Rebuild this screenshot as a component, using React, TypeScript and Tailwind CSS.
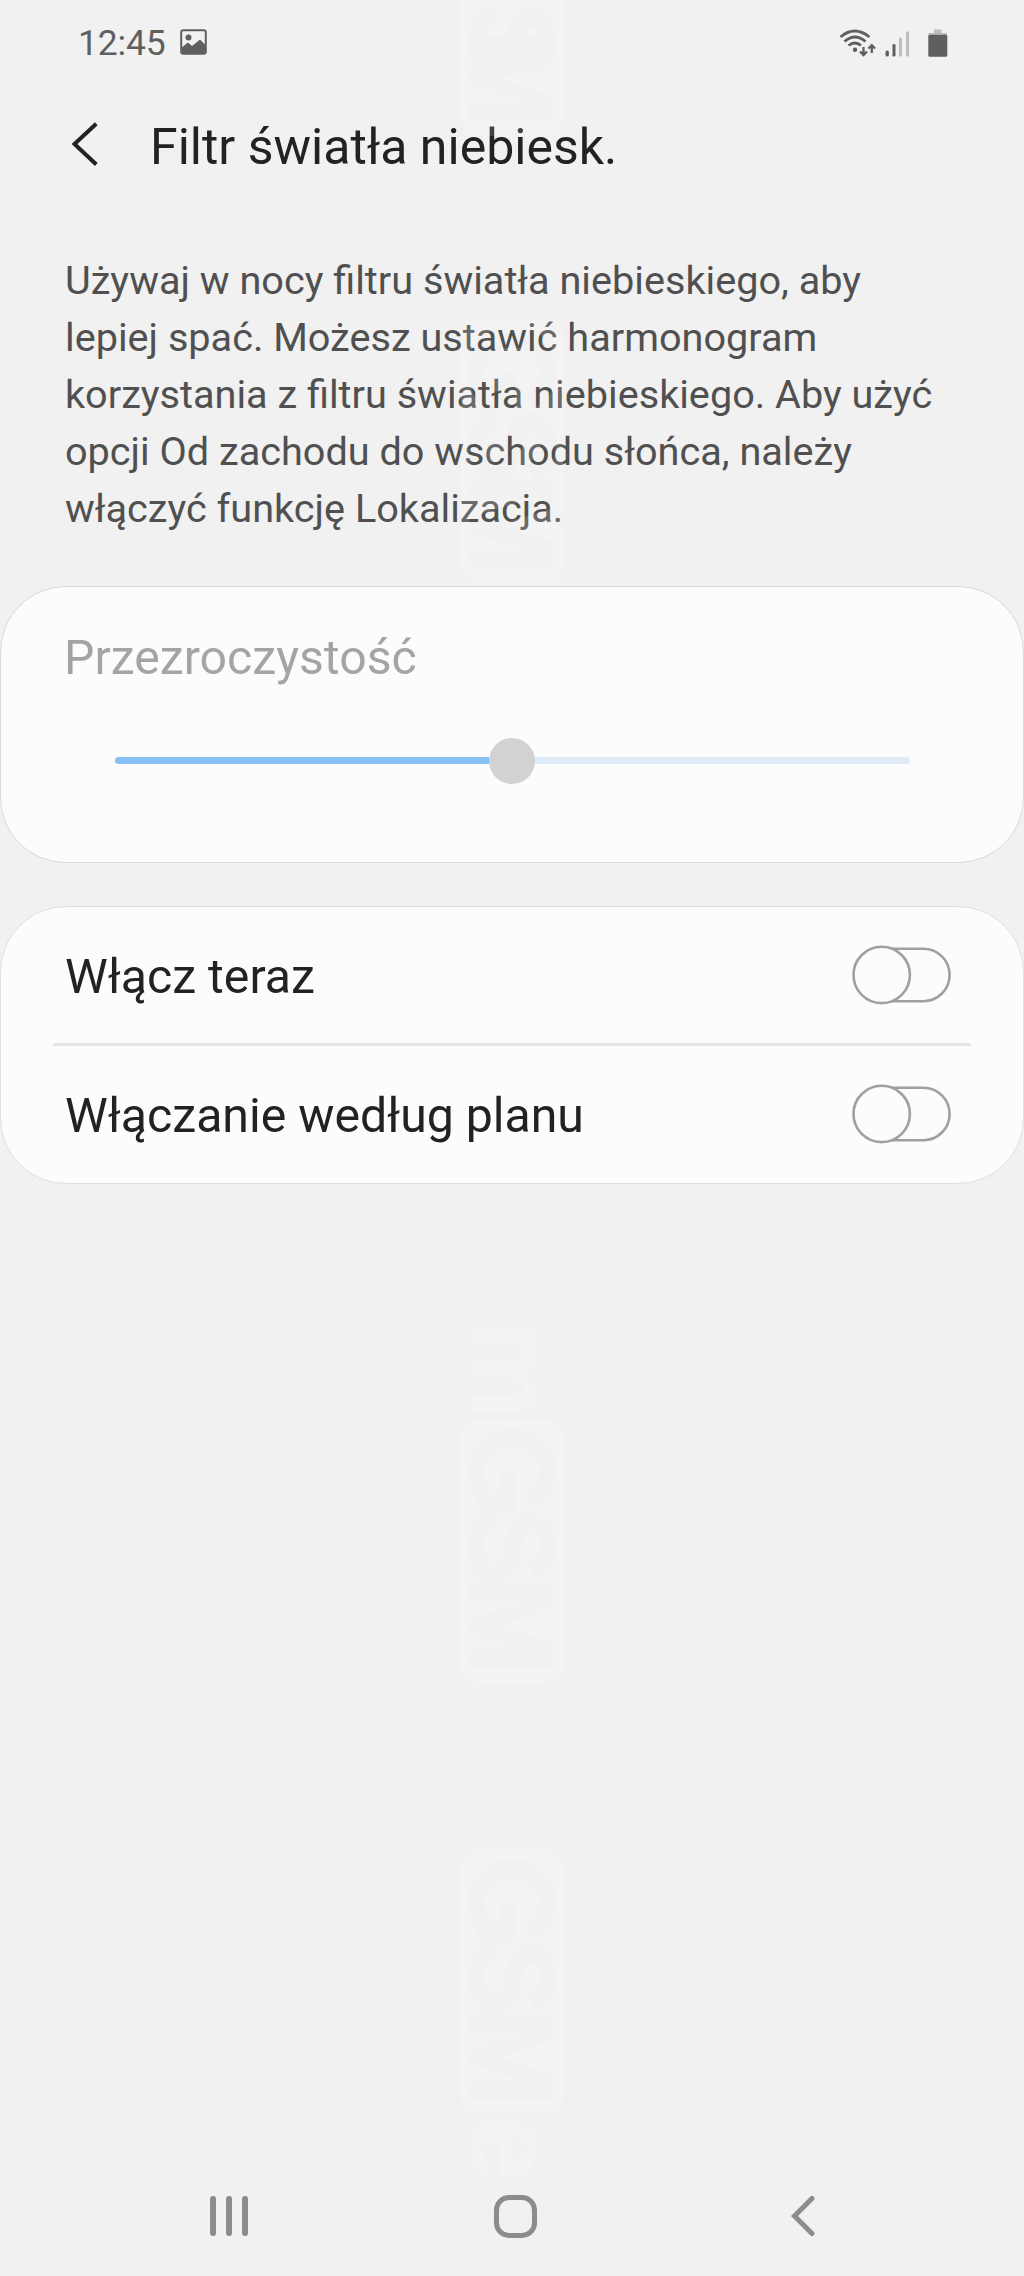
import React from "react";

function StatusBar() {
  return (
    <div className="flex h-22 items-center pr-[76px] pl-[78px] text-[#5f5f5f]">
      <span className="text-[35.5px] leading-none tracking-[-0.2px]">12:45</span>
      <svg className="mt-[-4px] ml-[15px]" width="28" height="26" viewBox="0 0 28 26">
        <rect x="1.2" y="1.2" width="24.6" height="23.6" rx="2" fill="none" stroke="#5f5f5f" strokeWidth="2" />
        <circle cx="8.5" cy="8.5" r="3" fill="#5f5f5f" />
        <path d="M1 19 L8 13.5 L12 17 L20 10.5 L26 16.5 V24 H1 Z" fill="#5f5f5f" />
      </svg>
      <svg className="mt-[-5px] ml-auto" width="110" height="30" viewBox="838 26 110 30">
        <g fill="none" stroke="#5f5f5f" strokeWidth="2.7">
          <path d="M840.5 36 Q854.5 24 869.5 36" />
          <path d="M844.5 40.5 Q855 31.5 865.5 40.5" />
          <path d="M848.5 44.5 Q855 39.5 861 44.5" />
          <path d="M863.5 46 V54 M860 50.5 L863.5 54 L867 50.5 M871.8 52 V44.5 M868.5 47.5 L871.8 44.2 L875 47.5" strokeWidth="2.3" />
        </g>
        <circle cx="855" cy="48.7" r="2.2" fill="#5f5f5f" />
        <rect x="885.5" y="49.5" width="3.4" height="6" rx="1.5" fill="#5f5f5f" />
        <rect x="892.5" y="43" width="3" height="12.5" rx="1.2" fill="#5f5f5f" />
        <rect x="899" y="36.5" width="3" height="19" rx="1.2" fill="#bcbcbc" />
        <rect x="906" y="30.5" width="3" height="25" rx="1.2" fill="#bcbcbc" />
        <path d="M934 34 V28.5 H941.5 V34 Z M928.5 32 H947 V35 H928.5 Z" fill="#bcbcbc" />
        <rect x="928.3" y="33.7" width="19" height="22" rx="1.5" fill="#5f5f5f" />
      </svg>
    </div>
  );
}

function Toggle() {
  return (
    <svg width="99" height="60" viewBox="0 0 99 60" role="switch" aria-checked="false">
      <rect x="2.6" y="3.7" width="95" height="52.5" rx="26.25" fill="#fcfcfc" stroke="#a0a0a0" strokeWidth="2.6" />
      <circle cx="29.7" cy="29.9" r="28.2" fill="#fcfcfc" stroke="#a0a0a0" strokeWidth="2.6" />
    </svg>
  );
}

function SettingRow({ label }: { label: string }) {
  return (
    <div className="flex h-[136px] items-center justify-between pr-[72px] pl-16">
      <span className="pt-1 text-[48.2px] leading-none">{label}</span>
      <Toggle />
    </div>
  );
}

type BoxedMarkProps = { id: string; y: number; text?: string; textX?: number; textWidth?: number };

function BoxedMark({ id, y, text = "GSM", textX = 6, textWidth = 250 }: BoxedMarkProps) {
  return (
    <g transform={`translate(563 ${y}) rotate(90)`}>
      <mask id={id} maskUnits="userSpaceOnUse" x="0" y="0" width="264" height="102">
        <rect width="264" height="102" rx="16" fill="white" />
        <text x={textX} y="92" fontSize="118" fontWeight="700" textLength={textWidth} fill="black" stroke="black" strokeWidth="3">
          {text}
        </text>
      </mask>
      <rect width="264" height="102" rx="16" fill="white" mask={`url(#${id})`} />
    </g>
  );
}

function Watermark() {
  return (
    <svg
      className="pointer-events-none absolute inset-0 font-['Liberation_Sans',sans-serif] opacity-14"
      width="1024"
      height="2276"
      viewBox="0 0 1024 2276"
      aria-hidden="true"
    >
      <BoxedMark id="mark-a" y={-128} text="SM" textX={131} textWidth={125} />
      <BoxedMark id="mark-b" y={318} />
      <BoxedMark id="mark-c" y={1419} />
      <BoxedMark id="mark-d" y={1850} />
      <text transform="translate(472 1320) rotate(90)" fontSize="118" fontWeight="700" textLength="98" lengthAdjust="spacingAndGlyphs" fill="white">m</text>
      <text transform="translate(472 2116) rotate(90)" fontSize="118" fontWeight="700" fill="white">e</text>
    </svg>
  );
}

export default function App() {
  return (
    <div className="relative flex h-[2276px] w-[1024px] flex-col overflow-hidden bg-[#f1f1f1] font-[Roboto,sans-serif] text-[#222222]">
      <StatusBar />
      <header className="flex h-[118px] items-center pl-[70px]">
        <svg className="mt-[-6px]" width="30" height="46" viewBox="0 0 30 46" fill="none" stroke="#222222" strokeWidth="4">
          <path d="M26.3 2.8 L4.5 23 L26.3 43.5" />
        </svg>
        <h1 className="ml-[50px] text-[50px] leading-none">Filtr światła niebiesk.</h1>
      </header>
      <p className="mt-[46px] h-[334px] pl-[65px] text-[39.65px] leading-[57px] whitespace-nowrap text-[#505050]">
        Używaj w nocy filtru światła niebieskiego, aby<br />
        lepiej spać. Możesz ustawić harmonogram<br />
        korzystania z filtru światła niebieskiego. Aby użyć<br />
        opcji Od zachodu do wschodu słońca, należy<br />
        włączyć funkcję Lokalizacja.
      </p>
      <section className="flex h-[277px] flex-col rounded-[66px] border border-[#d9d9d9] bg-[#fcfcfc] pt-[47px]">
        <h2 className="pl-[63px] text-[48.2px] leading-none text-[#a4a4a4]">Przezroczystość</h2>
        <div className="mt-[55px] ml-[114px] flex h-[47px] w-[795px] items-center">
          <div className="h-[7px] w-[374px] rounded-l-full bg-[#87c0f4]" />
          <div className="h-[46px] w-[46px] rounded-full bg-[#d2d2d2]" />
          <div className="h-[7px] flex-1 rounded-r-full bg-[#dfecf8]" />
        </div>
      </section>
      <section className="mt-[43px] h-[278px] rounded-[66px] border border-[#dfdfdf] bg-[#fcfcfc]">
        <SettingRow label="Włącz teraz" />
        <div className="mx-[52px] h-[3px] rounded-full bg-[#e4e4e4]" />
        <SettingRow label="Włączanie według planu" />
      </section>
      <nav className="mt-auto flex h-[120px] items-center justify-between pr-[208px] pl-[210px]">
        <div className="flex gap-[10.5px]">
          <i className="h-10 w-[5.5px] rounded-full bg-[#8c8c8c]" />
          <i className="h-10 w-[5.5px] rounded-full bg-[#8c8c8c]" />
          <i className="h-10 w-[5.5px] rounded-full bg-[#8c8c8c]" />
        </div>
        <div className="mr-[7px] h-[43px] w-[43px] rounded-[15px] border-[5px] border-[#8c8c8c]" />
        <svg width="25" height="42" viewBox="0 0 25 42" fill="none" stroke="#8c8c8c" strokeWidth="5" strokeLinecap="round">
          <path d="M21 3.5 L3.5 21 L21 38.5" />
        </svg>
      </nav>
      <Watermark />
    </div>
  );
}
